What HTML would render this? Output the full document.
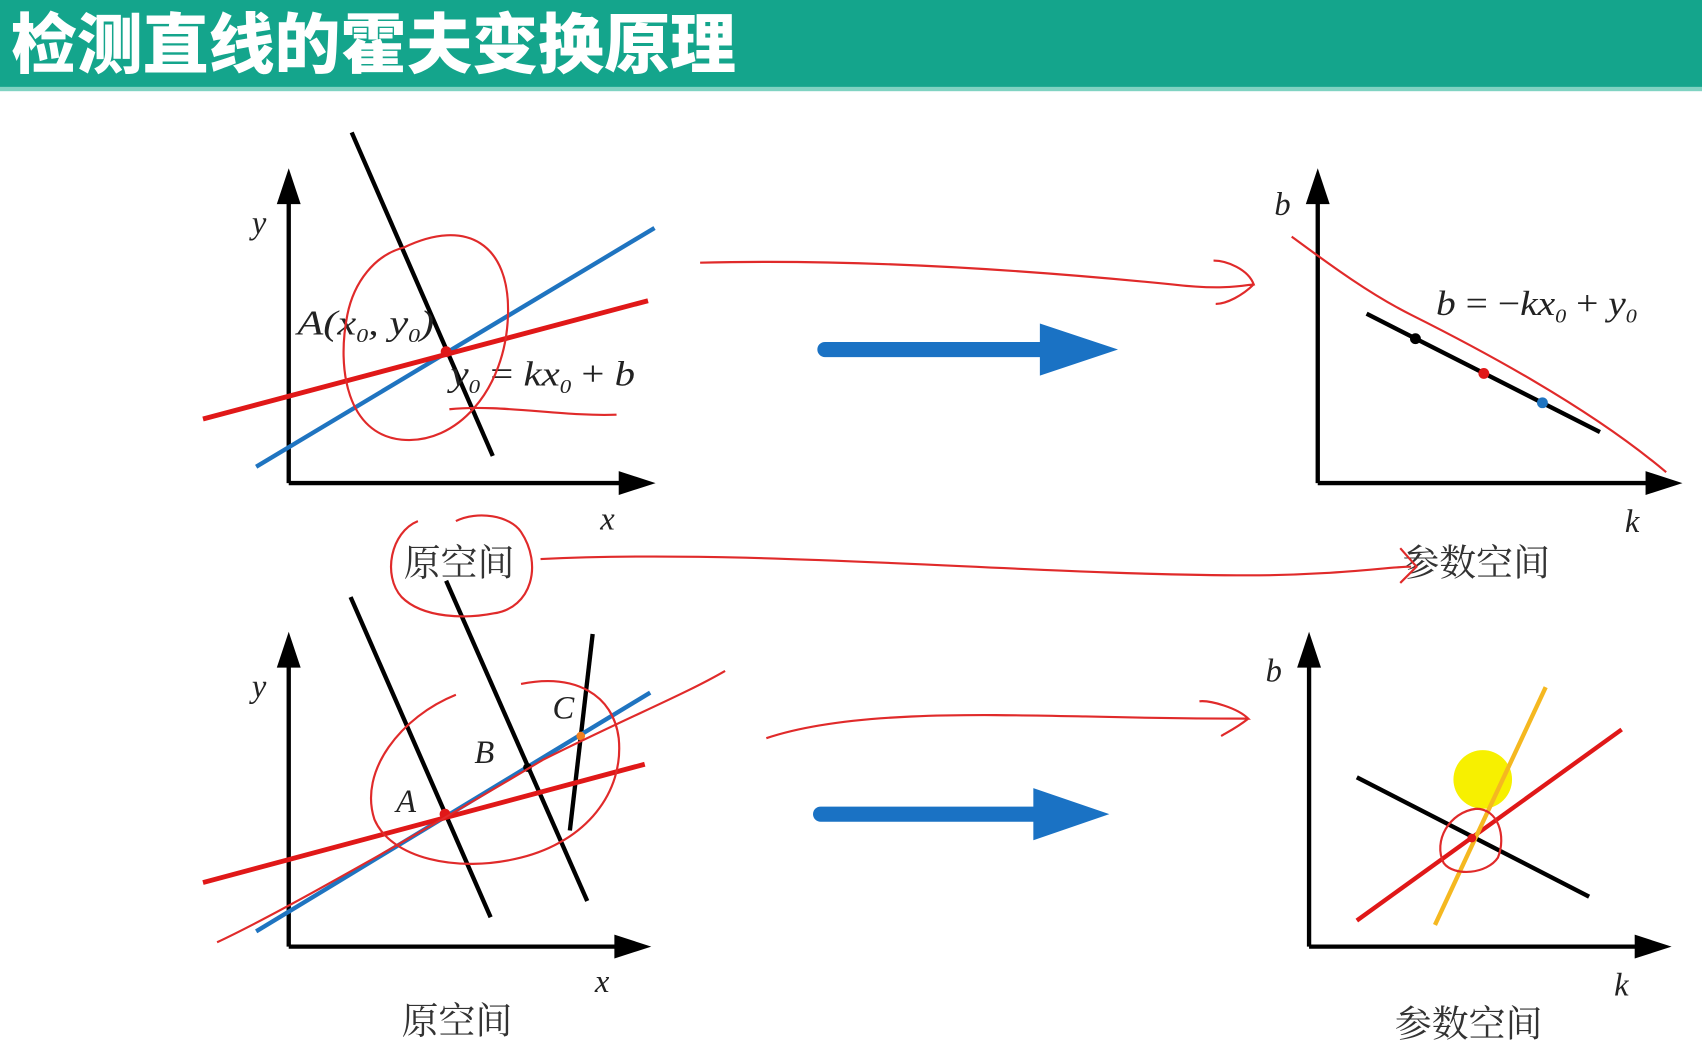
<!DOCTYPE html>
<html><head><meta charset="utf-8"><style>
html,body{margin:0;padding:0;background:#fff;overflow:hidden}
svg{display:block}
.t{font-family:"Liberation Serif","Noto Serif CJK SC",serif;font-style:italic;fill:#222}
.c{font-family:"Liberation Serif","Noto Serif CJK SC",serif;fill:#333}
</style></head><body>
<svg width="1702" height="1053" viewBox="0 0 1568 970" preserveAspectRatio="none" xmlns="http://www.w3.org/2000/svg">
<rect x="0" y="0" width="1568" height="82" fill="#14a58c"/>
<rect x="0" y="80" width="1568" height="4" fill="#7fd3c2"/>
<text x="10" y="62" font-family="'Noto Sans CJK SC',sans-serif" font-weight="900" font-size="60" fill="#fff" textLength="668" lengthAdjust="spacingAndGlyphs">检测直线的霍夫变换原理</text>

<g stroke="#000" stroke-width="4" fill="none">
<line x1="266" y1="445" x2="266" y2="185"/><line x1="266" y1="445" x2="575" y2="445"/>
<line x1="266" y1="872" x2="266" y2="612"/><line x1="266" y1="872" x2="570" y2="872"/>
<line x1="1214" y1="445" x2="1214" y2="185"/><line x1="1214" y1="445" x2="1520" y2="445"/>
<line x1="1206" y1="872" x2="1206" y2="612"/><line x1="1206" y1="872" x2="1510" y2="872"/>
</g>
<g fill="#000">
<polygon points="266,155 255,188 277,188"/><polygon points="604,445 570,434 570,456"/>
<polygon points="266,582 255,615 277,615"/><polygon points="600,872 566,861 566,883"/>
<polygon points="1214,155 1203,188 1225,188"/><polygon points="1550,445 1516,434 1516,456"/>
<polygon points="1206,582 1195,615 1217,615"/><polygon points="1540,872 1506,861 1506,883"/>
</g>
<line x1="324" y1="122" x2="454" y2="420" stroke="#000" stroke-width="4"/>
<line x1="236" y1="430" x2="603" y2="210" stroke="#1f74c0" stroke-width="4"/>
<line x1="187" y1="386" x2="597" y2="277" stroke="#e01818" stroke-width="4.5"/>
<circle cx="411" cy="324" r="5" fill="#e01818"/>
<text class="t" x="274" y="308" font-size="32" textLength="126" lengthAdjust="spacingAndGlyphs">A(x<tspan font-size="18" dy="7">0</tspan><tspan dy="-7">, y</tspan><tspan font-size="18" dy="7">0</tspan><tspan dy="-7">)</tspan></text>
<text class="t" x="415" y="355" font-size="32" textLength="170" lengthAdjust="spacingAndGlyphs">y<tspan font-size="18" dy="7">0</tspan><tspan dy="-7" font-style="normal"> = </tspan>kx<tspan font-size="18" dy="7">0</tspan><tspan dy="-7" font-style="normal"> + </tspan>b</text>
<text class="t" x="232" y="215" font-size="30">y</text>
<text class="t" x="553" y="488" font-size="30">x</text>
<text class="c" x="372" y="530" font-size="34">原空间</text>
<line x1="1259" y1="289" x2="1474" y2="398" stroke="#000" stroke-width="4"/>
<circle cx="1304" cy="312" r="5" fill="#000"/><circle cx="1367" cy="344" r="5" fill="#e01818"/><circle cx="1421" cy="371" r="5" fill="#1f74c0"/>
<text class="t" x="1174" y="198" font-size="30">b</text>
<text class="t" x="1497" y="490" font-size="30">k</text>
<text class="t" x="1323" y="290" font-size="32" textLength="185" lengthAdjust="spacingAndGlyphs">b<tspan font-style="normal"> = −</tspan>kx<tspan font-size="18" dy="7">0</tspan><tspan dy="-7" font-style="normal"> + </tspan>y<tspan font-size="18" dy="7">0</tspan></text>
<text class="c" x="1292" y="530" font-size="34">参数空间</text>
<line x1="760" y1="322" x2="962" y2="322" stroke="#1a72c4" stroke-width="14" stroke-linecap="round"/>
<polygon points="958,298 1030,322 958,346" fill="#1a72c4"/>
<line x1="756" y1="750" x2="956" y2="750" stroke="#1a72c4" stroke-width="14" stroke-linecap="round"/>
<polygon points="952,726 1022,750 952,774" fill="#1a72c4"/>
<line x1="323" y1="550" x2="452" y2="845" stroke="#000" stroke-width="4"/>
<line x1="411" y1="535" x2="541" y2="830" stroke="#000" stroke-width="4"/>
<line x1="546" y1="584" x2="525" y2="765" stroke="#000" stroke-width="4"/>
<line x1="236" y1="858" x2="599" y2="638" stroke="#1f74c0" stroke-width="4"/>
<line x1="187" y1="813" x2="594" y2="704" stroke="#e01818" stroke-width="4.5"/>
<circle cx="410" cy="750" r="5" fill="#e01818"/><circle cx="486" cy="707" r="4" fill="#000"/><circle cx="535" cy="678" r="4" fill="#f08020"/>
<text class="t" x="365" y="748" font-size="30">A</text>
<text class="t" x="437" y="703" font-size="30">B</text>
<text class="t" x="509" y="662" font-size="30">C</text>
<text class="t" x="232" y="642" font-size="30">y</text>
<text class="t" x="548" y="914" font-size="30">x</text>
<text class="c" x="370" y="952" font-size="34">原空间</text>
<circle cx="1366" cy="718" r="27" fill="#f7f000"/>
<line x1="1250" y1="716" x2="1464" y2="826" stroke="#000" stroke-width="4"/>
<line x1="1250" y1="848" x2="1494" y2="672" stroke="#e01818" stroke-width="4"/>
<line x1="1322" y1="852" x2="1424" y2="633" stroke="#f5b820" stroke-width="4"/>
<circle cx="1356" cy="772" r="4" fill="#e01818"/>
<text class="t" x="1166" y="628" font-size="30">b</text>
<text class="t" x="1487" y="917" font-size="30">k</text>
<text class="c" x="1285" y="955" font-size="34">参数空间</text>
<g stroke="#e02a2a" stroke-width="2" fill="none">
<path d="M372,228 C430,200 470,225 468,290 C466,360 420,410 370,405 C320,400 310,340 320,290 C326,260 345,235 372,228"/>
<path d="M414,377 C460,372 520,384 568,382"/>
<path d="M645,242 C800,238 960,250 1080,262 C1130,268 1150,262 1155,262 C1150,248 1130,240 1118,240 M1155,262 C1145,272 1130,280 1120,280"/>
<path d="M1190,218 C1220,240 1260,270 1300,290 C1380,330 1470,380 1535,435"/>
<path d="M385,480 C360,490 352,530 370,550 C390,570 430,570 455,565 C490,560 500,520 480,490 C470,475 440,470 420,480"/>
<path d="M498,515 C700,505 950,530 1150,530 C1230,530 1280,522 1300,522 M1290,505 L1305,522 L1290,537"/>
<path d="M420,640 C370,660 330,710 345,755 C360,790 420,805 480,790 C540,775 575,730 570,680 C565,640 530,620 480,630"/>
<path d="M200,868 C260,840 400,760 500,700 C580,660 630,640 668,618"/>
<path d="M706,680 C780,655 900,658 1000,660 C1080,662 1120,662 1150,662 C1140,652 1115,645 1105,646 M1150,662 C1140,670 1130,675 1125,678"/>
<path d="M1360,745 C1380,745 1388,770 1380,790 C1370,805 1340,808 1330,795 C1320,775 1335,748 1360,745"/>
</g>
</svg>
</body></html>
